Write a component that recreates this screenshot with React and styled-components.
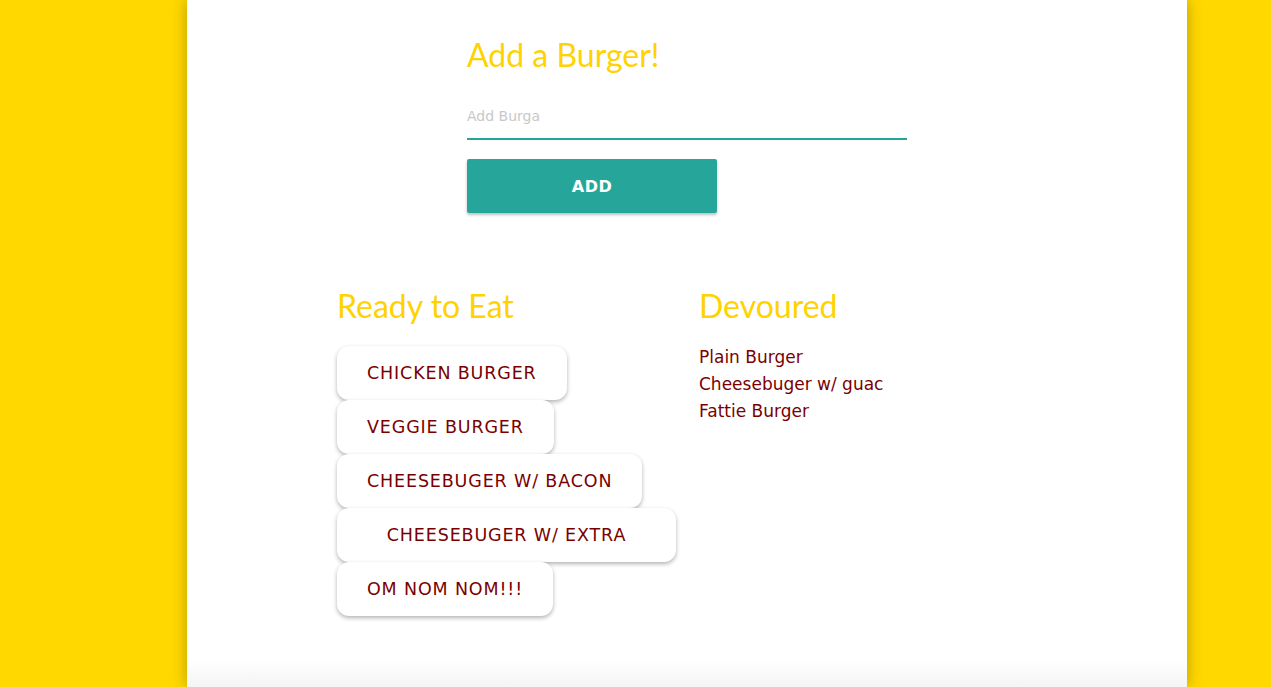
import React from "react";
import styled, { createGlobalStyle } from "styled-components";

const Global = createGlobalStyle`
  html, body { margin: 0; padding: 0; background: #ffd800; }
  body { font-family: "DejaVu Sans", "Open Sans", sans-serif; overflow: hidden; }
  * { box-sizing: border-box; }
`;

const Page = styled.div`
  width: 1000px;
  height: 687px;
  margin-left: 187px;
  background: #fff;
  box-shadow: 0 0 14px rgba(0, 0, 0, 0.28);
  display: flex;
  flex-direction: column;
`;

const Main = styled.main`
  flex: 1;
  padding: 0 0 0 150px;
`;

const Footer = styled.footer`
  height: 28px;
  background: linear-gradient(#ffffff, #f4f4f4);
`;

const FormSection = styled.section`
  width: 440px;
  margin-left: 130px;
  padding-top: 34px;
`;

const Title = styled.h2`
  margin: 0;
  font-family: "Lato", sans-serif;
  font-weight: 400;
  font-size: 32px;
  line-height: 42px;
  color: #ffd200;
`;

const Input = styled.input`
  display: block;
  width: 100%;
  height: 44px;
  margin-top: 20px;
  border: none;
  border-bottom: 2px solid #26a69a;
  outline: none;
  padding: 0 0 2px;
  font-family: inherit;
  font-size: 14px;
  color: #333;
  &::placeholder { color: #c8c8c8; }
`;

const AddButton = styled.button`
  display: block;
  width: 250px;
  height: 54px;
  margin-top: 19px;
  border: none;
  border-radius: 2px;
  background: #26a69a;
  color: #fff;
  font-family: inherit;
  font-size: 16px;
  font-weight: 700;
  letter-spacing: 0.5px;
  box-shadow: 0 2px 3px rgba(0, 0, 0, 0.25);
`;

const Columns = styled.div`
  display: grid;
  grid-template-columns: 362px 1fr;
  margin-top: 72px;
`;

const Column = styled.div`
  display: flex;
  flex-direction: column;
  align-items: flex-start;
`;

const BurgerList = styled.div`
  display: flex;
  flex-direction: column;
  align-items: flex-start;
  margin-top: 19px;
`;

const BurgerButton = styled.button`
  height: 54px;
  width: ${(p) => (p.$w ? `${p.$w}px` : "auto")};
  padding: 0 30px;
  border: none;
  border-radius: 12px;
  background: #fff;
  color: #7a0000;
  font-family: inherit;
  font-size: 17.5px;
  letter-spacing: 0.85px;
  text-align: ${(p) => (p.$w ? "center" : "left")};
  white-space: nowrap;
  box-shadow: 0 2px 4px rgba(0, 0, 0, 0.3);
`;

const Eaten = styled.ul`
  list-style: none;
  margin: 17px 0 0;
  padding: 0;
`;

const EatenItem = styled.li`
  font-size: 17px;
  line-height: 27px;
  color: #7a0000;
`;

const ready = [
  { name: "CHICKEN BURGER" },
  { name: "VEGGIE BURGER" },
  { name: "CHEESEBUGER W/ BACON" },
  { name: "CHEESEBUGER W/ EXTRA", w: 339 },
  { name: "OM NOM NOM!!!" },
];

const devoured = ["Plain Burger", "Cheesebuger w/ guac", "Fattie Burger"];

export default function App() {
  return (
    <>
      <Global />
      <Page>
        <Main>
          <FormSection>
            <Title>Add a Burger!</Title>
            <Input placeholder="Add Burga" />
            <AddButton>ADD</AddButton>
          </FormSection>
          <Columns>
            <Column>
              <Title>Ready to Eat</Title>
              <BurgerList>
                {ready.map((b) => (
                  <BurgerButton key={b.name} $w={b.w}>
                    {b.name}
                  </BurgerButton>
                ))}
              </BurgerList>
            </Column>
            <Column>
              <Title>Devoured</Title>
              <Eaten>
                {devoured.map((d) => (
                  <EatenItem key={d}>{d}</EatenItem>
                ))}
              </Eaten>
            </Column>
          </Columns>
        </Main>
        <Footer />
      </Page>
    </>
  );
}
